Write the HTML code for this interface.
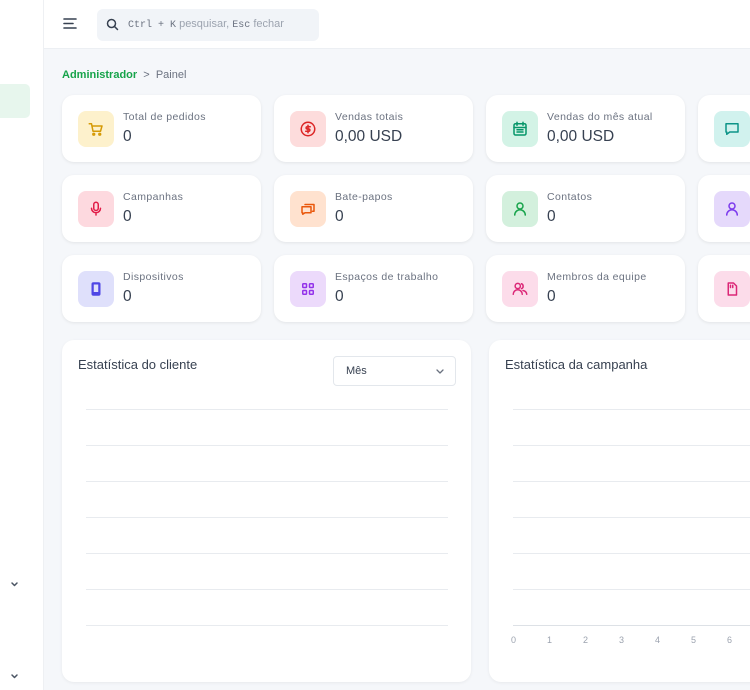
<!DOCTYPE html><html><head><style>
*{box-sizing:border-box;margin:0;padding:0}
body{width:750px;height:690px;overflow:hidden;background:#f5f7fa;font-family:"Liberation Sans",sans-serif;position:relative;color:#374151}
.abs{position:absolute}
.side{left:0;top:0;width:44px;height:690px;background:#fff;border-right:1px solid #eef0f3}
.hdr{left:44px;top:0;width:706px;height:49px;background:#fff;border-bottom:1px solid #eceff3}
.card{position:absolute;width:199px;height:67px;background:#fff;border-radius:12px;box-shadow:0 1px 3px rgba(0,0,0,.08)}
.ib{position:absolute;left:16px;top:16px;width:36px;height:36px;border-radius:8px;display:flex;align-items:center;justify-content:center}
.lb{position:absolute;left:61px;top:16px;font-size:10.5px;color:#6b7280;letter-spacing:.4px}
.vl{position:absolute;left:61px;top:33px;font-size:15.5px;color:#374151}
.panel{position:absolute;top:340px;height:342px;background:#fff;border-radius:12px;box-shadow:0 1px 3px rgba(0,0,0,.06)}
.gl{position:absolute;height:1px;background:#e8ebef}
.tk{position:absolute;font-size:9px;color:#9ca3af}
svg{fill:none;stroke-width:2;stroke-linecap:round;stroke-linejoin:round}
</style></head><body>
<div class="abs side"></div>
<div class="abs" style="left:0;top:84px;width:30px;height:34px;background:#e7f6ed;border-radius:0 5px 5px 0"></div>
<svg class="abs" style="left:10px;top:581px" width="9" height="7" viewBox="0 0 9 7"><path d="M2 2l2.5 2.5L7 2" stroke="#4b5563" stroke-width="1.5"/></svg>
<svg class="abs" style="left:10px;top:673px" width="9" height="7" viewBox="0 0 9 7"><path d="M2 2l2.5 2.5L7 2" stroke="#4b5563" stroke-width="1.5"/></svg>
<div class="abs hdr"></div>
<svg class="abs" style="left:63px;top:17px" width="15" height="13" viewBox="0 0 15 13"><path d="M1 2h12M1 6.5h9M1 11h12" stroke="#374151" stroke-width="1.6"/></svg>
<div class="abs" style="left:97px;top:9px;width:222px;height:32px;background:#f1f4f8;border-radius:6px"></div>
<svg class="abs" style="left:106px;top:18px" width="13" height="13" viewBox="0 0 13 13"><circle cx="5.5" cy="5.5" r="4" stroke="#374151" stroke-width="1.5"/><path d="M8.5 8.5l3 3" stroke="#374151" stroke-width="1.5"/></svg>
<div class="abs" style="left:128px;top:18px;font-size:11px;color:#9ca3af"><span style="font-family:'Liberation Mono',monospace;font-size:10px;color:#6b7280">Ctrl + K</span> pesquisar, <span style="font-family:'Liberation Mono',monospace;font-size:10px;color:#6b7280">Esc</span> fechar</div>
<div class="abs" style="left:62px;top:69px;font-size:11px"><span style="color:#16a34a;font-weight:bold">Administrador</span> <span style="color:#6b7280">&nbsp;&gt;&nbsp; Painel</span></div>

<div class="card" style="left:62px;top:95px"><div class="ib" style="background:#fdf1cc"><svg width="18" height="18" viewBox="0 0 24 24"><path d="M3 5h3l2 10h10l2-7H7" stroke="#d59a06"/><circle cx="9" cy="19" r="1.2" stroke="#d59a06"/><circle cx="17" cy="19" r="1.2" stroke="#d59a06"/></svg></div><div class="lb">Total de pedidos</div><div class="vl">0</div></div>
<div class="card" style="left:274px;top:95px"><div class="ib" style="background:#fddcdc"><svg width="18" height="18" viewBox="0 0 24 24"><circle cx="12" cy="12" r="9" stroke="#dc2626"/><path d="M15 9h-4a1.5 1.5 0 000 3h2a1.5 1.5 0 010 3H9M12 7v10" stroke="#dc2626"/></svg></div><div class="lb">Vendas totais</div><div class="vl">0,00 USD</div></div>
<div class="card" style="left:486px;top:95px"><div class="ib" style="background:#d3f3e6"><svg width="18" height="18" viewBox="0 0 24 24"><rect x="4" y="5" width="16" height="15" rx="2" stroke="#059669"/><path d="M4 10h16M8 3v4M16 3v4M8 13h8M8 16h8" stroke="#059669"/></svg></div><div class="lb">Vendas do mês atual</div><div class="vl">0,00 USD</div></div>
<div class="card" style="left:698px;top:95px"><div class="ib" style="background:#d1f2ee"><svg width="18" height="18" viewBox="0 0 24 24"><path d="M4 5h16v11H9l-4 3v-3H4z" stroke="#0d9488"/></svg></div></div>
<div class="card" style="left:62px;top:175px"><div class="ib" style="background:#fdd9df"><svg width="18" height="18" viewBox="0 0 24 24"><rect x="9" y="3" width="6" height="11" rx="3" stroke="#e11d48"/><path d="M6 11a6 6 0 0012 0M12 17v3" stroke="#e11d48"/></svg></div><div class="lb">Campanhas</div><div class="vl">0</div></div>
<div class="card" style="left:274px;top:175px"><div class="ib" style="background:#ffe2cf"><svg width="18" height="18" viewBox="0 0 24 24"><path d="M8 6h12v9h-2M4 9h12v8H8l-3 2v-2H4z" stroke="#ea580c"/></svg></div><div class="lb">Bate-papos</div><div class="vl">0</div></div>
<div class="card" style="left:486px;top:175px"><div class="ib" style="background:#d3f0dd"><svg width="18" height="18" viewBox="0 0 24 24"><circle cx="12" cy="8" r="4" stroke="#16a34a"/><path d="M5 20a7 7 0 0114 0" stroke="#16a34a"/></svg></div><div class="lb">Contatos</div><div class="vl">0</div></div>
<div class="card" style="left:698px;top:175px"><div class="ib" style="background:#e5d9fb"><svg width="18" height="18" viewBox="0 0 24 24"><circle cx="12" cy="8" r="4" stroke="#7c3aed"/><path d="M5 20a7 7 0 0114 0" stroke="#7c3aed"/></svg></div></div>
<div class="card" style="left:62px;top:255px"><div class="ib" style="background:#dfe0fb"><svg width="18" height="18" viewBox="0 0 24 24"><rect x="7" y="4" width="10" height="16" rx="1.5" fill="#4f46e5" stroke="#4f46e5"/><rect x="9" y="6" width="6" height="10" fill="#dfe0fb" stroke="none"/></svg></div><div class="lb">Dispositivos</div><div class="vl">0</div></div>
<div class="card" style="left:274px;top:255px"><div class="ib" style="background:#ecdafb"><svg width="18" height="18" viewBox="0 0 24 24"><rect x="5" y="5" width="5" height="5" rx="1" stroke="#9333ea"/><rect x="14" y="5" width="5" height="5" rx="1" stroke="#9333ea"/><rect x="5" y="14" width="5" height="5" rx="1" stroke="#9333ea"/><rect x="14" y="14" width="5" height="5" rx="1" stroke="#9333ea"/></svg></div><div class="lb">Espaços de trabalho</div><div class="vl">0</div></div>
<div class="card" style="left:486px;top:255px"><div class="ib" style="background:#fcdcea"><svg width="18" height="18" viewBox="0 0 24 24"><circle cx="9" cy="8" r="3.5" stroke="#db2777"/><path d="M3 19a6 6 0 0112 0M14 5a3.5 3.5 0 010 6.5M16 14a6 6 0 015 5" stroke="#db2777"/></svg></div><div class="lb">Membros da equipe</div><div class="vl">0</div></div>
<div class="card" style="left:698px;top:255px"><div class="ib" style="background:#fcdcea"><svg width="18" height="18" viewBox="0 0 24 24"><path d="M7 4h7l4 4v12H7z" stroke="#db2777"/><path d="M10 7v3M13 7v3" stroke="#db2777"/></svg></div></div>

<div class="panel" style="left:62px;width:409px">
<div class="abs" style="left:16px;top:17px;font-size:13px;color:#374151">Estatística do cliente</div>
<div class="abs" style="left:271px;top:16px;width:123px;height:30px;border:1px solid #e3e7ec;border-radius:4px"><span class="abs" style="left:12px;top:8px;font-size:11px">Mês</span><svg class="abs" style="left:101px;top:11px" width="10" height="8" viewBox="0 0 10 8"><path d="M2 2l3 3 3-3" stroke="#6b7280" stroke-width="1.3"/></svg></div>
<div class="gl" style="left:24px;width:362px;top:69px"></div><div class="gl" style="left:24px;width:362px;top:105px"></div><div class="gl" style="left:24px;width:362px;top:141px"></div><div class="gl" style="left:24px;width:362px;top:177px"></div><div class="gl" style="left:24px;width:362px;top:213px"></div><div class="gl" style="left:24px;width:362px;top:249px"></div><div class="gl" style="left:24px;width:362px;top:285px"></div>
</div>
<div class="panel" style="left:489px;width:300px">
<div class="abs" style="left:16px;top:17px;font-size:13px;color:#374151">Estatística da campanha</div>
<div class="gl" style="left:24px;width:240px;top:69px"></div><div class="gl" style="left:24px;width:240px;top:105px"></div><div class="gl" style="left:24px;width:240px;top:141px"></div><div class="gl" style="left:24px;width:240px;top:177px"></div><div class="gl" style="left:24px;width:240px;top:213px"></div><div class="gl" style="left:24px;width:240px;top:249px"></div><div class="gl" style="left:24px;width:240px;top:285px;background:#dde1e6"></div>
<div class="tk" style="left:22px;top:295px">0</div><div class="tk" style="left:58px;top:295px">1</div><div class="tk" style="left:94px;top:295px">2</div><div class="tk" style="left:130px;top:295px">3</div><div class="tk" style="left:166px;top:295px">4</div><div class="tk" style="left:202px;top:295px">5</div><div class="tk" style="left:238px;top:295px">6</div>
</div>
</body></html>
